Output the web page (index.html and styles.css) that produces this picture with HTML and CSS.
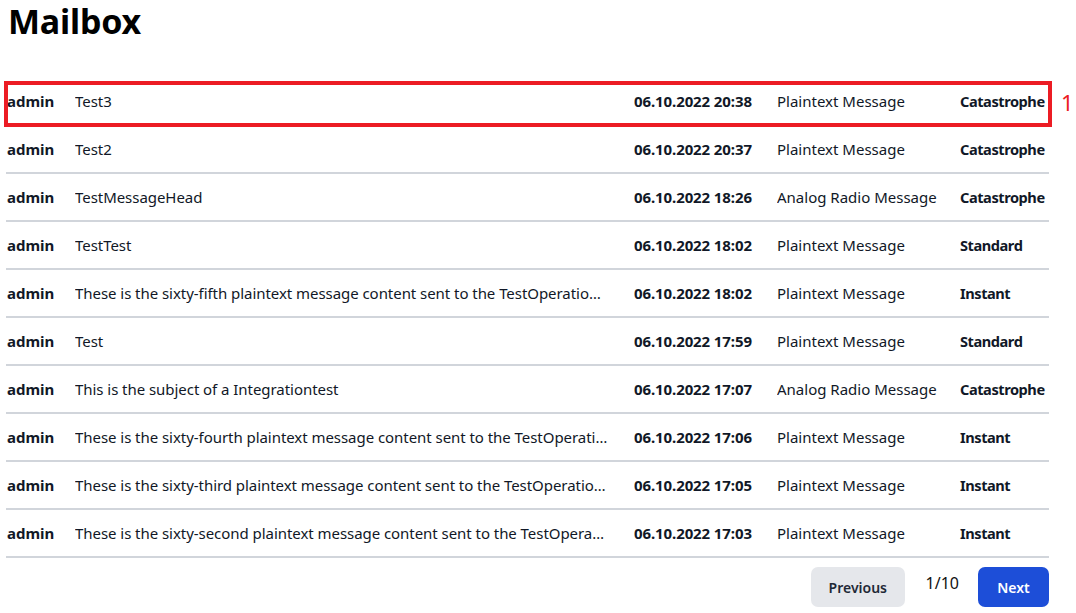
FILE: index.html
```html
<!DOCTYPE html>
<html>
<head>
<meta charset="utf-8">
<link rel="stylesheet" href="styles.css">
</head>
<body>
<div class="page">
  <h1 class="title">Mailbox</h1>
  <div class="table-wrap">
    <table class="mail">
      <colgroup>
        <col class="c-user"><col class="c-subject"><col class="c-date"><col class="c-type"><col class="c-prio">
      </colgroup>
      <tbody>
        <tr><td class="user">admin</td><td class="subject">Test3</td><td class="date">06.10.2022 20:38</td><td class="type">Plaintext Message</td><td class="prio">Catastrophe</td></tr>
        <tr><td class="user">admin</td><td class="subject">Test2</td><td class="date">06.10.2022 20:37</td><td class="type">Plaintext Message</td><td class="prio">Catastrophe</td></tr>
        <tr><td class="user">admin</td><td class="subject">TestMessageHead</td><td class="date">06.10.2022 18:26</td><td class="type">Analog Radio Message</td><td class="prio">Catastrophe</td></tr>
        <tr><td class="user">admin</td><td class="subject">TestTest</td><td class="date">06.10.2022 18:02</td><td class="type">Plaintext Message</td><td class="prio">Standard</td></tr>
        <tr><td class="user">admin</td><td class="subject">These is the sixty-fifth plaintext message content sent to the TestOperatio…</td><td class="date">06.10.2022 18:02</td><td class="type">Plaintext Message</td><td class="prio">Instant</td></tr>
        <tr><td class="user">admin</td><td class="subject">Test</td><td class="date">06.10.2022 17:59</td><td class="type">Plaintext Message</td><td class="prio">Standard</td></tr>
        <tr><td class="user">admin</td><td class="subject">This is the subject of a Integrationtest</td><td class="date">06.10.2022 17:07</td><td class="type">Analog Radio Message</td><td class="prio">Catastrophe</td></tr>
        <tr><td class="user">admin</td><td class="subject">These is the sixty-fourth plaintext message content sent to the TestOperati…</td><td class="date">06.10.2022 17:06</td><td class="type">Plaintext Message</td><td class="prio">Instant</td></tr>
        <tr><td class="user">admin</td><td class="subject">These is the sixty-third plaintext message content sent to the TestOperatio…</td><td class="date">06.10.2022 17:05</td><td class="type">Plaintext Message</td><td class="prio">Instant</td></tr>
        <tr><td class="user">admin</td><td class="subject">These is the sixty-second plaintext message content sent to the TestOpera…</td><td class="date">06.10.2022 17:03</td><td class="type">Plaintext Message</td><td class="prio">Instant</td></tr>
      </tbody>
    </table>
    <div class="highlight"></div>
    <div class="marker">1</div>
  </div>
  <div class="pager">
    <button class="btn btn-prev">Previous</button>
    <span class="count">1/10</span>
    <button class="btn btn-next">Next</button>
  </div>
</div>
</body>
</html>
```
FILE: styles.css
```css
* { box-sizing: border-box; }
html, body { margin: 0; padding: 0; background: #fff; }
body {
  font-family: "Noto Sans", "Open Sans", sans-serif;
  color: #111;
  width: 1076px;
  height: 613px;
  overflow: hidden;
}
.page {
  padding: 0 27px 0 6px;
}
.title {
  margin: 0 0 0 2px;
  padding-top: 0;
  height: 77px;
  font-size: 34px;
  line-height: 42px;
  font-weight: 700;
  letter-spacing: -0.2px;
  color: #000;
}
.table-wrap {
  position: relative;
}
.mail {
  width: 1043px;
  border-collapse: collapse;
  table-layout: fixed;
  font-size: 15px;
}
.c-user { width: 69px; }
.c-subject { width: 559px; }
.c-date { width: 143px; }
.c-type { width: 183px; }
.c-prio { width: 89px; }
.mail tr { height: 48px; border-bottom: 2px solid #d1d5db; }
.mail td {
  padding: 0;
  white-space: nowrap;
  overflow: hidden;
  vertical-align: middle;
  color: #111827;
}
.mail td.user { font-weight: 700; padding-left: 1px; }
.mail td.subject { text-overflow: ellipsis; padding-right: 12px; letter-spacing: -0.05px; }
.mail td.date { font-weight: 700; letter-spacing: -0.1px; }
.mail td.prio {
  font-weight: 700;
  font-size: 14.6px;
  letter-spacing: -0.45px;
  overflow: visible;
}
.highlight {
  position: absolute;
  left: -2px;
  top: 4px;
  width: 1048px;
  height: 46px;
  border: 4px solid #ec1c24;
}
.marker {
  position: absolute;
  left: 1055px;
  top: 12px;
  font-size: 22px;
  line-height: 26px;
  color: #ec1c24;
  font-family: "Noto Sans", sans-serif;
}
.pager {
  display: flex;
  justify-content: flex-end;
  align-items: center;
  width: 1043px;
  margin-top: 9px;
}
.btn {
  height: 40px;
  border: none;
  border-radius: 7px;
  font-family: "Noto Sans", sans-serif;
  font-size: 14px;
  font-weight: 600;
  padding: 0 18px;
}
.btn-prev {
  background: #e5e7eb;
  color: #1f2937;
  width: 94px;
}
.btn-next {
  background: #1d4ed8;
  color: #fff;
  width: 71px;
}
.count {
  margin: 0 19px 0 21px;
  font-size: 16px;
  position: relative;
  top: -4px;
  color: #111;
}
```
